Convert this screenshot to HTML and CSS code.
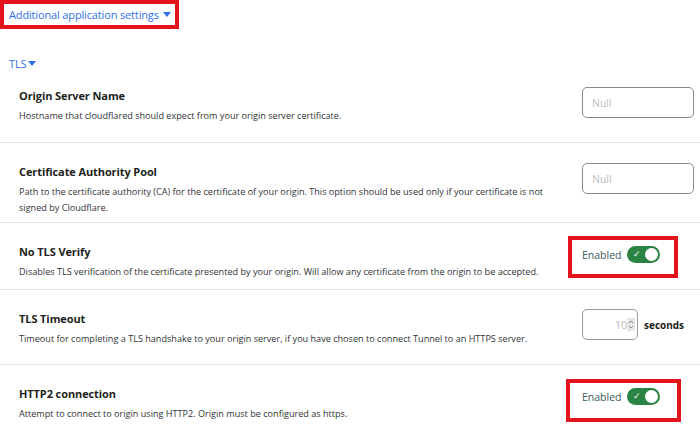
FILE: index.html
```html
<!DOCTYPE html>
<html lang="en">
    <head>
        <meta charset="UTF-8">
        <meta name="viewport" content="width=device-width, initial-scale=1.0">
        <title>Tunnel settings</title>
        <link rel="stylesheet" href="styles.css">
    </head>
    <body>
        <div class="topbox">
            <a class="toggler" href="#">Additional application settings <span class="caret"></span></a>
        </div>
        <a class="toggler sub" href="#">TLS<span class="caret"></span></a>

        <div class="settings">
            <div class="row">
                <div class="info">
                    <h3>Origin Server Name</h3>
                    <p>Hostname that cloudflared should expect from your origin server certificate.</p>
                </div>
                <div class="ctl">
                    <input class="field" type="text" placeholder="Null">
                </div>
            </div>
            <div class="row">
                <div class="info">
                    <h3>Certificate Authority Pool</h3>
                    <p>Path to the certificate authority (CA) for the certificate of your origin. This option should be used only if your certificate is not signed by Cloudflare.</p>
                </div>
                <div class="ctl">
                    <input class="field" type="text" placeholder="Null">
                </div>
            </div>
            <div class="row">
                <div class="info">
                    <h3>No TLS Verify</h3>
                    <p>Disables TLS verification of the certificate presented by your origin. Will allow any certificate from the origin to be accepted.</p>
                </div>
                <div class="ctl">
                    <label class="switch marked">Enabled
                        <span class="track"><span class="tick">&#10003;</span><span class="knob"></span></span>
                    </label>
                </div>
            </div>
            <div class="row">
                <div class="info">
                    <h3>TLS Timeout</h3>
                    <p>Timeout for completing a TLS handshake to your origin server, if you have chosen to connect Tunnel to an HTTPS server.</p>
                </div>
                <div class="ctl">
                    <div class="numbox">
                        <span class="num">10</span>
                        <svg class="spin" width="8" height="13" viewBox="0 0 8 13">
                            <path d="M2 5 L4 3 L6 5 M2 8 L4 10 L6 8" fill="none" stroke="#8a8a8a" stroke-width="1"/>
                        </svg>
                    </div>
                    <b class="unit">seconds</b>
                </div>
            </div>
            <div class="row">
                <div class="info">
                    <h3>HTTP2 connection</h3>
                    <p>Attempt to connect to origin using HTTP2. Origin must be configured as https.</p>
                </div>
                <div class="ctl">
                    <label class="switch marked wide">Enabled
                        <span class="track"><span class="tick">&#10003;</span><span class="knob"></span></span>
                    </label>
                </div>
            </div>
        </div>
    </body>
</html>
```

FILE: styles.css
```css
*{
    box-sizing: border-box;
}
body{
    margin: 0;
    font-family: "Open Sans", "Noto Sans", sans-serif;
    color: #1d1f20;
    background: white;
}
.topbox{
    width: 179px;
    height: 29px;
    border: 4px solid #e4141f;
    padding: 3px 0 0 5px;
    font-size: 11px;
    line-height: 15px;
}
.toggler{
    color: #2f72e6;
    text-decoration: none;
    font-size: 11px;
    letter-spacing: -0.15px;
    line-height: 15px;
}
.caret{
    display: inline-block;
    width: 0;
    height: 0;
    margin-left: 2px;
    border-left: 4px solid transparent;
    border-right: 4px solid transparent;
    border-top: 5px solid #2f72e6;
    vertical-align: 2px;
}
.sub{
    display: block;
    margin: 27px 0 0 9px;
    line-height: 16px;
}
.settings{
    margin-top: -5px;
}
.row{
    display: grid;
    grid-template-columns: 545px 1fr;
    column-gap: 18px;
    padding: 21px 6px 6px 19px;
    border-bottom: 1px solid #e6e6e6;
}
.row h3{
    margin: 0 0 4px;
    font-size: 11px;
    line-height: 16px;
    font-weight: 700;
    letter-spacing: -0.1px;
}
.row p{
    margin: 0;
    font-size: 9.1px;
    line-height: 16px;
    color: #303335;
}
.ctl{
    display: flex;
    align-items: center;
    align-self: start;
    position: relative;
    margin-bottom: 18px;
}
.field{
    width: 112px;
    height: 31px;
    margin-top: -1px;
    border: 1px solid #8b8b8b;
    border-radius: 5px;
    padding: 0 9px;
    font-family: inherit;
    font-size: 10.5px;
    outline: none;
}
.field::placeholder{
    color: #bcbcbc;
}
.numbox{
    width: 56px;
    height: 31px;
    margin-top: -2px;
    border: 1px solid #9a9a9a;
    border-radius: 5px;
    display: flex;
    align-items: center;
    justify-content: flex-end;
    padding-right: 2px;
}
.num{
    color: #b4b4b4;
    font-size: 10.5px;
}
.spin{
    display: block;
    background: #e6e6e6;
}
.unit{
    margin-left: 6px;
    font-size: 10px;
    margin-top: -1px;
}
.switch{
    display: flex;
    align-items: center;
    height: 21px;
    font-size: 10.5px;
    color: #375a57;
}
.track{
    position: relative;
    width: 33px;
    height: 17px;
    margin-left: 5px;
    border-radius: 9px;
    background: #2a8444;
}
.tick{
    position: absolute;
    left: 6px;
    top: 2px;
    color: white;
    font-size: 9px;
    line-height: 12px;
}
.knob{
    position: absolute;
    right: 2px;
    top: 2px;
    width: 13px;
    height: 13px;
    border-radius: 50%;
    background: white;
}
/* red call-out frames around the switches */
.marked::after{
    content: "";
    position: absolute;
    left: -14px;
    top: -8px;
    width: 102px;
    height: 34px;
    border: 4px solid #e4141f;
}
.wide::after{
    left: -16px;
    top: -7px;
    width: 107px;
    height: 35px;
}
```
